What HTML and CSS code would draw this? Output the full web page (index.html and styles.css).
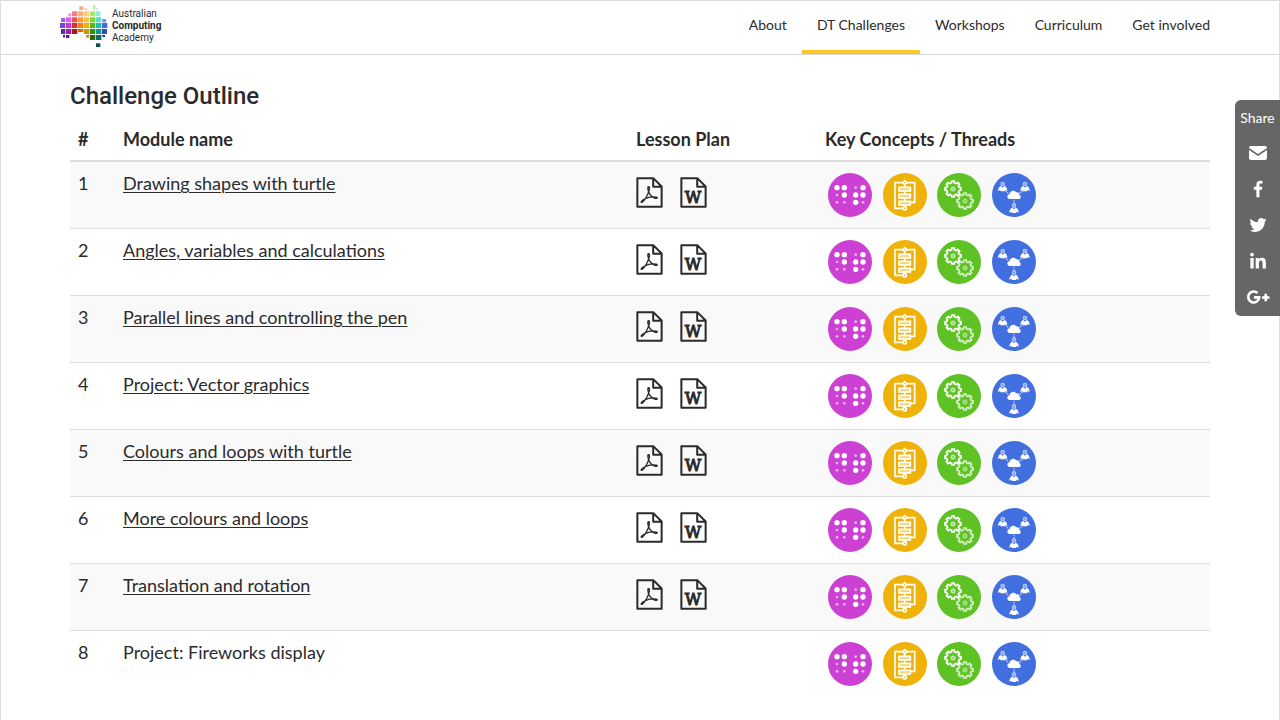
FILE: index.html
```html
<!DOCTYPE html>
<html lang="en">
<head>
<meta charset="utf-8">
<meta name="viewport" content="width=device-width, initial-scale=1">
<title>Challenge Outline</title>
<link rel="stylesheet" href="styles.css">
</head>
<body>
<header class="site-header">
  <a class="brand" href="#">
    <svg class="brand-mark" viewBox="30 12 144 132" aria-hidden="true">
      <g fill="#f6a890"><rect x="88" y="19" width="12" height="11"/><rect x="104" y="24" width="8" height="7" fill="#fbd0a0"/></g>
      <rect x="130" y="15" width="6" height="15" fill="#b6ec8c"/><rect x="139" y="24" width="5" height="6" fill="#a5ecd5"/>
      <rect x="55" y="40" width="9" height="9" fill="#f08cf0"/>
      <rect x="66" y="34" width="16" height="15" fill="#f08080"/><rect x="84" y="34" width="16" height="15" fill="#ffac78"/><rect x="102" y="34" width="16" height="15" fill="#ffcc78"/><rect x="120" y="34" width="16" height="15" fill="#a0ec70"/><rect x="138" y="34" width="13" height="15" fill="#90ecd8"/>
      <rect x="33" y="54" width="13" height="12" fill="#9264ec"/><rect x="48" y="52" width="16" height="15" fill="#e05cec"/><rect x="66" y="52" width="16" height="15" fill="#ee5050"/><rect x="84" y="52" width="16" height="15" fill="#ff983c"/><rect x="102" y="52" width="16" height="15" fill="#ffc040"/><rect x="120" y="52" width="16" height="15" fill="#78d830"/><rect x="138" y="52" width="16" height="15" fill="#58dcc8"/><rect x="157" y="57" width="11" height="10" fill="#6c98f4"/>
      <rect x="30" y="69" width="16" height="15" fill="#7444dc"/><rect x="48" y="69" width="16" height="15" fill="#c838d4"/><rect x="66" y="69" width="16" height="15" fill="#dc3030"/><rect x="84" y="69" width="16" height="15" fill="#f08010"/><rect x="102" y="69" width="16" height="15" fill="#efb000"/><rect x="120" y="69" width="16" height="15" fill="#50b81c"/><rect x="138" y="69" width="16" height="15" fill="#20c0b0"/><rect x="156" y="69" width="16" height="15" fill="#3c6ce0"/>
      <rect x="33" y="87" width="13" height="15" fill="#5828b8"/><rect x="48" y="87" width="16" height="15" fill="#a020a8"/><rect x="66" y="87" width="16" height="15" fill="#b01820"/><rect x="84" y="87" width="16" height="9" fill="#d06c00"/><rect x="102" y="87" width="16" height="15" fill="#d09800"/><rect x="120" y="87" width="16" height="15" fill="#2c9010"/><rect x="138" y="87" width="16" height="15" fill="#109888"/><rect x="156" y="87" width="15" height="15" fill="#2850c0"/>
      <rect x="39" y="105" width="6" height="7" fill="#401898"/><rect x="48" y="105" width="10" height="9" fill="#701078"/><rect x="109" y="105" width="8" height="8" fill="#b88400"/><rect x="120" y="105" width="16" height="15" fill="#286808"/><rect x="138" y="105" width="16" height="15" fill="#087060"/><rect x="157" y="105" width="8" height="6" fill="#1838a0"/>
      <rect x="138" y="130" width="13" height="11" fill="#085048"/>
    </svg>
    <span class="brand-name">Australian<br><strong>Computing</strong><br>Academy</span>
  </a>
  <nav class="main-nav" aria-label="Main">
    <a href="#">About</a>
    <a class="active" href="#" aria-current="page">DT Challenges</a>
    <a href="#">Workshops</a>
    <a href="#">Curriculum</a>
    <a href="#">Get involved</a>
  </nav>
</header>

<svg class="sprite" aria-hidden="true">
  <symbol id="page" viewBox="18 21 80 92">
    <path d="M22 25H70L94 49V109H22Z M69 25V50H94" fill="none" stroke="#2b2b2b" stroke-width="6" stroke-linejoin="round"/>
  </symbol>
  <symbol id="pdf" viewBox="18 21 80 92">
    <use href="#page" x="18" y="21" width="80" height="92"/>
    <path d="M54 50C58 49 59 53 57 60C55 70 45 90 36 96C31 98 33 92 42 87C52 82 68 79 78 81C85 83 79 86 72 83C62 79 53 67 53 54Z" fill="none" stroke="#2b2b2b" stroke-width="4"/>
  </symbol>
  <symbol id="data" viewBox="24 24 132 132">
    <circle cx="90" cy="90" r="66" fill="#cc40d4"/>
    <g fill="#fff"><circle cx="51" cy="68" r="8"/><circle cx="73" cy="68" r="8"/><circle cx="129" cy="68" r="8"/><circle cx="73" cy="90" r="8"/><circle cx="107" cy="90" r="8"/><circle cx="129" cy="90" r="8"/><circle cx="107" cy="112" r="8"/></g>
    <g fill="#eeb4f2"><circle cx="107" cy="68" r="4"/><circle cx="51" cy="90" r="4"/><circle cx="51" cy="112" r="4"/><circle cx="73" cy="112" r="4"/><circle cx="129" cy="112" r="4"/></g>
  </symbol>
  <symbol id="algorithm" viewBox="188 24 132 132">
    <circle cx="254" cy="90" r="66" fill="#efb208"/>
    <g fill="none" stroke="#fff" stroke-width="5"><path d="M247 53H224V130H247M259 53H283V112H271M253 59V67M253 79V88M253 100V109M253 121V125"/><path d="M253 47L259 53L253 59L247 53Z"/><circle cx="253" cy="130" r="5"/></g>
    <g fill="#f7d67a" stroke="#fff" stroke-width="5"><rect x="236" y="67" width="34" height="11"/><rect x="236" y="88" width="34" height="11"/><rect x="236" y="109" width="34" height="11"/></g>
  </symbol>
  <symbol id="implementation" viewBox="21 24 132 132">
    <circle cx="87" cy="90" r="66" fill="#5ec224"/>
    <g id="gear" fill="none" stroke="#fff" stroke-width="5" stroke-linejoin="round"><path d="M65 53L65 48H73V53L79 56L83 52L89 58L85 62L88 68H93V76H88L85 82L89 86L83 92L79 88L73 91V96H65V91L59 88L55 92L49 86L53 82L50 76H45V68H50L53 62L49 58L55 52L59 56Z"/><circle cx="69" cy="72" r="5" stroke="#c5eab0"/></g>
    <use href="#gear" x="36" y="36" opacity=".75"/>
  </symbol>
  <symbol id="impact" viewBox="186 24 132 132">
    <circle cx="252" cy="90" r="66" fill="#426fdf"/>
    <path d="M226 77L237 87M278 77L267 87M252 104V117" stroke="#b4c7f5" stroke-width="4" stroke-dasharray="5 2"/>
    <path d="M240 102C230 102 229 89 239 88C239 77 253 74 258 82C266 80 270 86 267 89C275 92 273 102 266 102Z" fill="#fff"/>
    <g id="person"><path d="M204 78C204 70 208 64 213 63L218 68L223 63C228 64 232 70 232 78L226 75L224 79H212L210 75Z" fill="#fff"/><circle cx="218" cy="57" r="5" fill="#7897e8" stroke="#b4c7f5" stroke-width="4"/></g>
    <use href="#person" x="67"/><use href="#person" x="34" y="65"/>
  </symbol>
  <symbol id="concepts" viewBox="0 0 208 44">
    <use href="#data" width="44" height="44"/><use href="#algorithm" x="55" width="44" height="44"/><use href="#implementation" x="109" width="44" height="44"/><use href="#impact" x="164" width="44" height="44"/>
  </symbol>
</svg>

<main class="content">
  <h1>Challenge Outline</h1>
  <table class="outline">
    <thead><tr><th class="col-num" scope="col">#</th><th class="col-name" scope="col">Module name</th><th class="col-plan" scope="col">Lesson Plan</th><th scope="col">Key Concepts / Threads</th></tr></thead>
    <tbody>
      <tr><td>1</td><td><a href="#">Drawing shapes with turtle</a></td><td><div class="files"><a href="#" aria-label="PDF"><svg><use href="#pdf"/></svg></a><a href="#" aria-label="Word"><svg viewBox="0 0 27 31"><use href="#page"/><text x="13" y="26">W</text></svg></a></div></td><td><svg class="concepts"><use href="#concepts"/></svg></td></tr>
      <tr><td>2</td><td><a href="#">Angles, variables and calculations</a></td><td><div class="files"><a href="#" aria-label="PDF"><svg><use href="#pdf"/></svg></a><a href="#" aria-label="Word"><svg viewBox="0 0 27 31"><use href="#page"/><text x="13" y="26">W</text></svg></a></div></td><td><svg class="concepts"><use href="#concepts"/></svg></td></tr>
      <tr><td>3</td><td><a href="#">Parallel lines and controlling the pen</a></td><td><div class="files"><a href="#" aria-label="PDF"><svg><use href="#pdf"/></svg></a><a href="#" aria-label="Word"><svg viewBox="0 0 27 31"><use href="#page"/><text x="13" y="26">W</text></svg></a></div></td><td><svg class="concepts"><use href="#concepts"/></svg></td></tr>
      <tr><td>4</td><td><a href="#">Project: Vector graphics</a></td><td><div class="files"><a href="#" aria-label="PDF"><svg><use href="#pdf"/></svg></a><a href="#" aria-label="Word"><svg viewBox="0 0 27 31"><use href="#page"/><text x="13" y="26">W</text></svg></a></div></td><td><svg class="concepts"><use href="#concepts"/></svg></td></tr>
      <tr><td>5</td><td><a href="#">Colours and loops with turtle</a></td><td><div class="files"><a href="#" aria-label="PDF"><svg><use href="#pdf"/></svg></a><a href="#" aria-label="Word"><svg viewBox="0 0 27 31"><use href="#page"/><text x="13" y="26">W</text></svg></a></div></td><td><svg class="concepts"><use href="#concepts"/></svg></td></tr>
      <tr><td>6</td><td><a href="#">More colours and loops</a></td><td><div class="files"><a href="#" aria-label="PDF"><svg><use href="#pdf"/></svg></a><a href="#" aria-label="Word"><svg viewBox="0 0 27 31"><use href="#page"/><text x="13" y="26">W</text></svg></a></div></td><td><svg class="concepts"><use href="#concepts"/></svg></td></tr>
      <tr><td>7</td><td><a href="#">Translation and rotation</a></td><td><div class="files"><a href="#" aria-label="PDF"><svg><use href="#pdf"/></svg></a><a href="#" aria-label="Word"><svg viewBox="0 0 27 31"><use href="#page"/><text x="13" y="26">W</text></svg></a></div></td><td><svg class="concepts"><use href="#concepts"/></svg></td></tr>
      <tr><td>8</td><td>Project: Fireworks display</td><td></td><td><svg class="concepts"><use href="#concepts"/></svg></td></tr>
    </tbody>
  </table>
</main>

<aside class="share" aria-label="Share">
  <span>Share</span>
  <a href="#" aria-label="Email"><svg viewBox="0 0 18 14"><path d="M2 0H16Q18 0 18 2L9 8L0 2Q0 0 2 0ZM0 4L9 10L18 4V12Q18 14 16 14H2Q0 14 0 12Z"/></svg></a>
  <a href="#" aria-label="Facebook"><svg viewBox="-384 64 1792 1792"><path d="M959 140v264h-157q-86 0-116 36t-30 108v189h293l-39 296h-254v759h-306v-759h-255v-296h255v-218q0-186 104-288.5t277-102.5q147 0 228 12z"/></svg></a>
  <a href="#" aria-label="Twitter"><svg viewBox="64 64 1664 1664"><path d="M1684 408q-67 98-162 167 1 14 1 42 0 130-38 259.5t-115.5 248.5-184.5 210.5-258 146-323 54.5q-271 0-496-145 35 4 78 4 225 0 401-138-105-2-188-64.5t-114-159.5q33 5 61 5 43 0 85-11-112-23-185.5-111.5t-73.5-205.5v-4q68 38 146 41-66-44-105-115t-39-154q0-88 44-163 121 149 294.5 238.5t371.5 99.5q-8-38-8-74 0-134 94.5-228.5t228.5-94.5q140 0 236 102 109-21 205-78-37 115-142 178 93-10 186-50z"/></svg></a>
  <a href="#" aria-label="LinkedIn"><svg viewBox="-32 -20 512 512"><path d="M100.28 448H7.4V148.9h92.88zM53.79 108.1C24.09 108.1 0 83.5 0 53.8a53.79 53.79 0 0 1 107.58 0c0 29.7-24.1 54.3-53.79 54.3zM447.9 448h-92.68V302.4c0-34.7-.7-79.2-48.29-79.2-48.29 0-55.69 37.7-55.69 76.7V448h-92.78V148.9h89.08v40.8h1.3c12.4-23.5 42.69-48.3 87.88-48.3 94 0 111.28 61.9 111.28 142.3V448z"/></svg></a>
  <a href="#" aria-label="Google Plus"><svg class="wide" viewBox="0 0 24 16"><path d="M11.5 4A5.5 5.5 0 1 0 13.2 8.4H8M16 8.5H23.5M19.75 4.8V12.2" fill="none" stroke="#fff" stroke-width="2.6"/></svg></a>
</aside>
</body>
</html>
```

FILE: styles.css
```css
* { box-sizing: border-box; }

body {
  margin: 0;
  min-height: 100vh;
  border: 1px solid #dedede;
  border-bottom: 0;
  background: #fff;
  color: #2b2b2b;
  font-family: Lato, "Liberation Sans", sans-serif;
  font-size: 18px;
  line-height: 26px;
}

a { color: inherit; }

.sprite {
  position: absolute;
  width: 0;
  height: 0;
}

.site-header {
  display: flex;
  justify-content: space-between;
  height: 54px;
  padding: 0 54px 0 59px;
  border-bottom: 1px solid #d6d6d6;
}

.brand {
  display: flex;
  gap: 4px;
  padding-top: 3px;
  text-decoration: none;
}

.brand-mark {
  width: 48px;
  height: 44px;
}

.brand-name {
  padding-top: 4px;
  font: 10px/12px Roboto, sans-serif;
}

.brand-name strong { font-weight: 700; }

.main-nav { display: flex; }

.main-nav a {
  padding: 12px 15px 0;
  border-bottom: 4px solid transparent;
  font-size: 14px;
  line-height: 24px;
  text-decoration: none;
}

.main-nav .active { border-color: #ffc629; }

.content {
  max-width: 1140px;
  margin: 0 auto;
  padding-top: 25px;
}

h1 {
  margin: 0 0 6px;
  font: 500 24px/32px Roboto, sans-serif;
}

.outline {
  width: 100%;
  border-collapse: collapse;
  table-layout: fixed;
}

.col-num { width: 45px; }
.col-name { width: 45%; }
.col-plan { width: 189px; }

.outline th {
  padding: 8px;
  border-bottom: 2px solid #dcdede;
  font-weight: 700;
  text-align: left;
}

.outline td {
  height: 67px;
  padding: 8px;
  border-top: 1px solid #dcdede;
  vertical-align: top;
}

.outline tbody tr:nth-child(odd) { background: #f9f9f9; }

.outline td > a {
  text-decoration-thickness: 1px;
  text-underline-offset: 2px;
}

.files {
  display: flex;
  gap: 17px;
  padding-top: 7px;
}

.files svg {
  display: block;
  width: 27px;
  height: 31px;
}

.files text {
  fill: #2b2b2b;
  stroke: #2b2b2b;
  stroke-width: 1px;
  font-family: "DejaVu Serif", serif;
  font-size: 16px;
  text-anchor: middle;
}

.concepts {
  display: block;
  width: 208px;
  height: 44px;
  margin: 3px 0 0 3px;
}

.share {
  position: fixed;
  top: 100px;
  right: 0;
  display: flex;
  flex-direction: column;
  align-items: center;
  width: 45px;
  padding-bottom: 1px;
  border-radius: 6px 0 0 6px;
  background: #666;
  color: #fff;
  font-size: 14px;
}

.share span {
  height: 35px;
  line-height: 36px;
}

.share a {
  display: flex;
  align-items: center;
  justify-content: center;
  height: 36px;
}

.share svg {
  width: 18px;
  height: 18px;
  fill: #fff;
}

.share .wide {
  width: 24px;
  height: 16px;
}
```
